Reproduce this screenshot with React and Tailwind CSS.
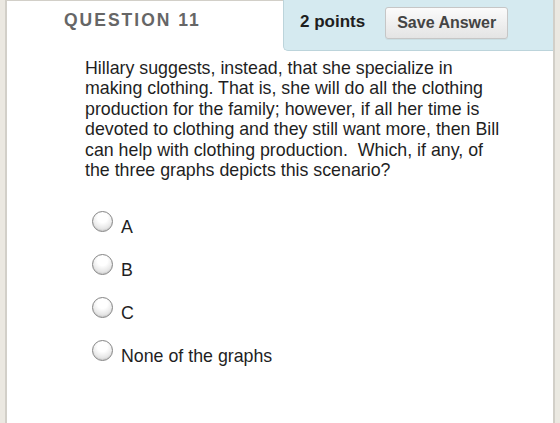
export default function App() {
  const options = ["A", "B", "C", "None of the graphs"];
  const lines = [
    "Hillary suggests, instead, that she specialize in",
    "making clothing. That is, she will do all the clothing",
    "production for the family; however, if all her time is",
    "devoted to clothing and they still want more, then Bill",
    "can help with clothing production.\u00a0 Which, if any, of",
    "the three graphs depicts this scenario?",
  ];
  return (
    <div className="w-[560px] h-[423px] bg-[#ebe8e1] flex font-['Liberation_Sans',Arial,sans-serif] overflow-hidden">
      <div className="ml-[5px] w-[550px] h-full bg-white border-l-2 border-r-2 border-t border-[#d2cfc8] flex flex-col">
        {/* question header */}
        <div className="flex justify-between items-start">
          <div className="pl-[57px] pt-[9px] text-[17.5px] leading-[20px] font-bold tracking-[2px] text-[#666666]">
            QUESTION 11
          </div>
          <div className="w-[270px] h-[51px] -mt-px bg-[#d5eaf0] border-l border-b border-[#bcd4db] rounded-bl-[5px] flex items-start pl-[16px] pt-[7px] gap-[20px]">
            <span className="text-[17px] leading-[30px] font-bold text-[#1e1e1e]">2 points</span>
            <button className="h-[32px] px-[11px] border border-[#c6c6c6] rounded-[3px] bg-gradient-to-b from-[#fbfbfb] to-[#e4e4e4] text-[16px] font-bold text-[#444444] shadow-[0_1px_0_rgba(0,0,0,0.05)]">
              Save Answer
            </button>
          </div>
        </div>

        {/* question text */}
        <div className="pl-[78px] pt-[7px] text-[17.8px] leading-[20.4px] text-[#1f1f1f] whitespace-nowrap">
          {lines.map((l) => (
            <div key={l}>{l}</div>
          ))}
        </div>

        {/* answer choices */}
        <div className="pl-[85px] pt-[31px] flex flex-col gap-[22px]">
          {options.map((label) => (
            <label key={label} className="flex items-start gap-[8px] h-[21px]">
              <span className="w-[21px] h-[21px] shrink-0 rounded-full border border-[#858585] bg-[radial-gradient(circle_at_50%_30%,#ffffff_30%,#d0d0d0_100%)] shadow-[inset_0_-1px_1px_rgba(0,0,0,0.08)]" />
              <span className="mt-[7px] text-[17.8px] leading-[18px] text-[#1f1f1f]">{label}</span>
            </label>
          ))}
        </div>
      </div>
    </div>
  );
}
